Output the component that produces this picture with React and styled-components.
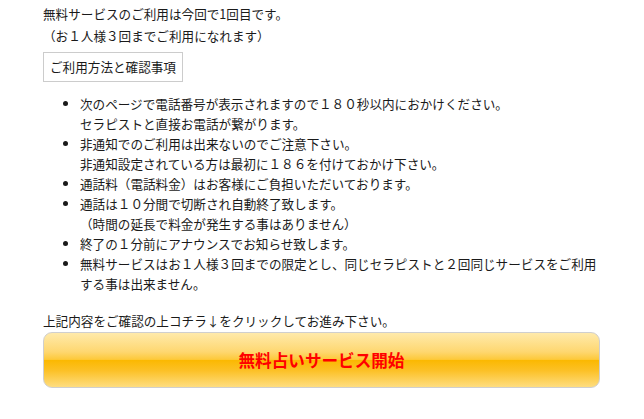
import React from "react";
import styled, { createGlobalStyle } from "styled-components";

const Global = createGlobalStyle`
  body {
    margin: 0;
    background: #ffffff;
    font-family: "Noto Sans CJK JP", "Noto Sans", sans-serif;
    color: #1a1a1a;
  }
`;

const items = [
  ["次のページで電話番号が表示されますので１８０秒以内におかけください。", "セラピストと直接お電話が繋がります。"],
  ["非通知でのご利用は出来ないのでご注意下さい。", "非通知設定されている方は最初に１８６を付けておかけ下さい。"],
  ["通話料（電話料金）はお客様にご負担いただいております。"],
  ["通話は１０分間で切断され自動終了致します。", "（時間の延長で料金が発生する事はありません）"],
  ["終了の１分前にアナウンスでお知らせ致します。"],
  ["無料サービスはお１人様３回までの限定とし、同じセラピストと２回同じサービスをご利用", "する事は出来ません。"],
];

export default function App() {
  return (
    <>
      <Global />
      <Page>
        <Intro>
          無料サービスのご利用は今回で1回目です。
          <br />
          （お１人様３回までご利用になれます）
        </Intro>
        <Label>ご利用方法と確認事項</Label>
        <Notes>
          {items.map((lines, i) => (
            <li key={i}>
              {lines.map((l, j) => (
                <React.Fragment key={j}>
                  {j > 0 && <br />}
                  {l}
                </React.Fragment>
              ))}
            </li>
          ))}
        </Notes>
        <Guide>上記内容をご確認の上コチラ↓をクリックしてお進み下さい。</Guide>
        <StartButton>無料占いサービス開始</StartButton>
      </Page>
    </>
  );
}

const Page = styled.div`
  width: 557px;
  padding: 3px 0 0 43px;
  font-size: 12.6px;
`;

const Intro = styled.p`
  margin: 0;
  line-height: 22px;
`;

const Label = styled.div`
  display: inline-block;
  margin-top: 5px;
  padding: 0 6px;
  border: 1px solid #cccccc;
  line-height: 28px;
`;

const Notes = styled.ul`
  margin: 12px 0 0;
  padding-left: 37px;
  line-height: 20px;
  list-style: disc;
`;

const Guide = styled.p`
  margin: 17px 0 0;
  line-height: 20px;
`;

const StartButton = styled.button`
  display: block;
  width: 557px;
  height: 56px;
  margin-top: 1px;
  border: 1px solid #cfcfcf;
  border-radius: 9px;
  background: linear-gradient(
    to bottom,
    #ffeaab 0%,
    #fed770 35%,
    #fdc93a 49%,
    #fbb800 50%,
    #fcc127 70%,
    #fedd80 100%
  );
  color: #ff0000;
  font-family: "Noto Sans CJK JP", "Noto Sans", sans-serif;
  font-size: 16.6px;
  font-weight: 700;
  cursor: pointer;
`;
